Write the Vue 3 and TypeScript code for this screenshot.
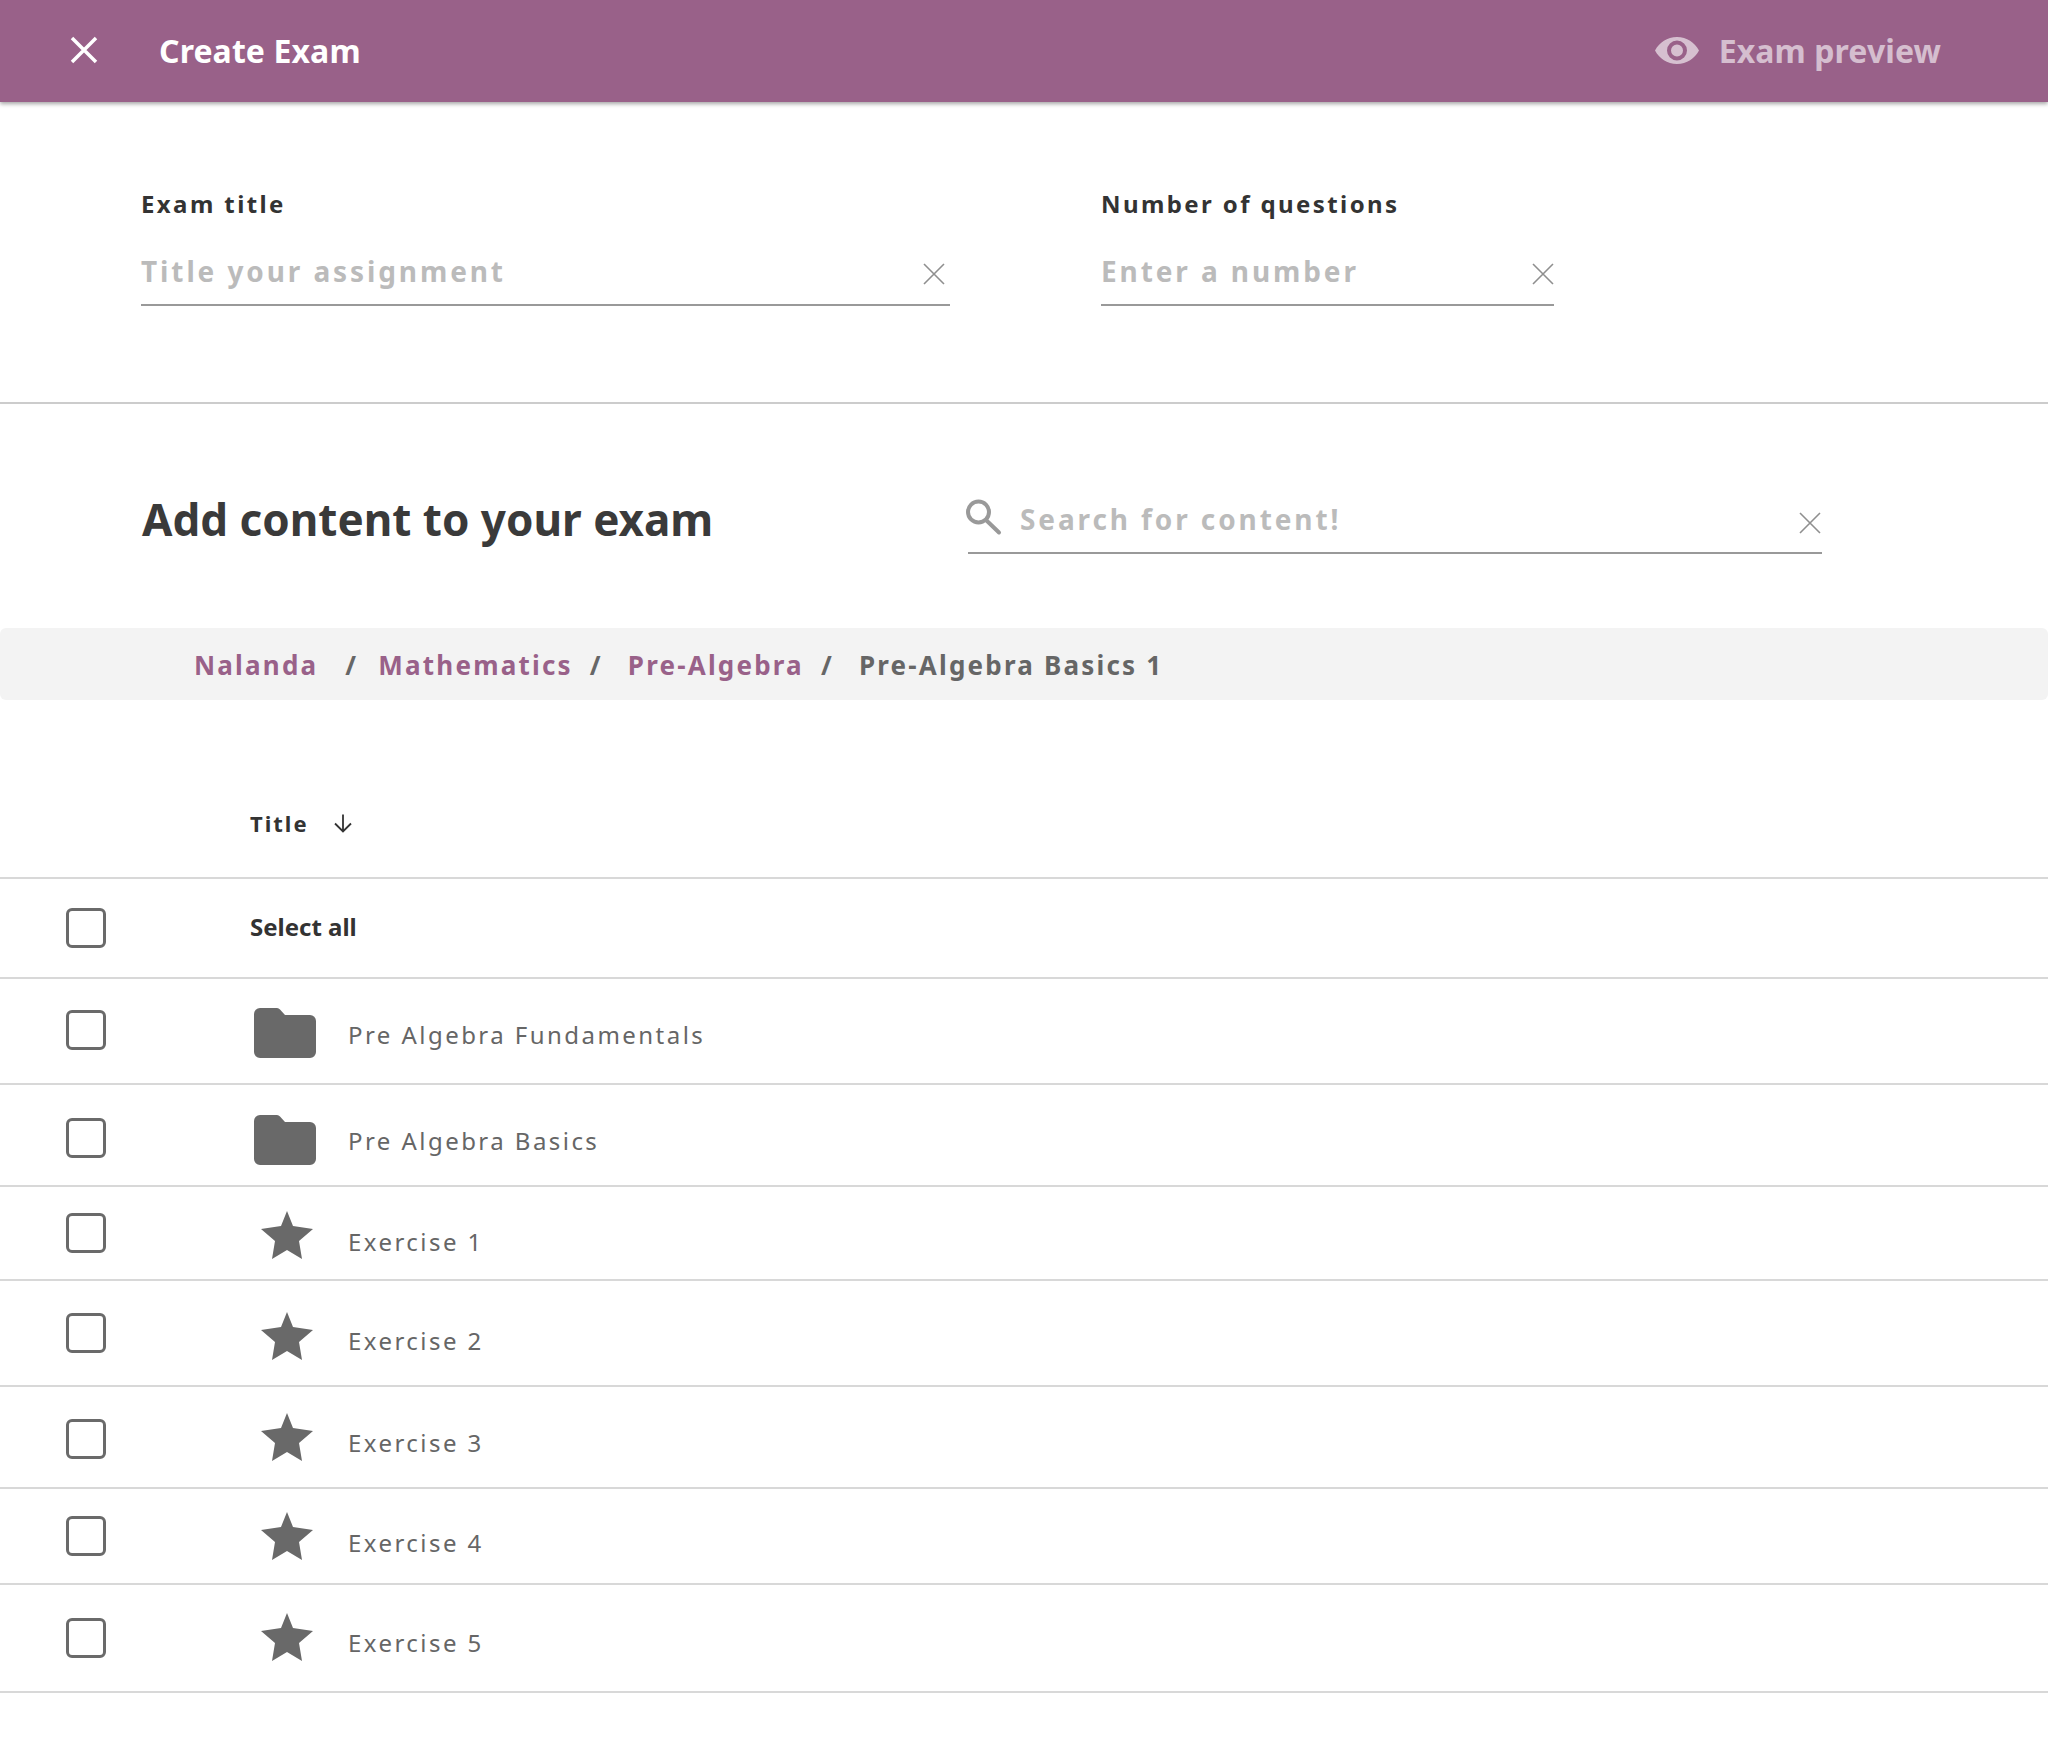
<script setup lang="ts">
interface Row {
  title: string
  kind: 'folder' | 'exercise'
  height: number
  // small per-row drift of the checkbox, icon and label around the row centre
  drift: [number, number, number]
}

const rows: Row[] = [
  { title: 'Pre Algebra Fundamentals', kind: 'folder', height: 106, drift: [-1, 0, -1] },
  { title: 'Pre Algebra Basics', kind: 'folder', height: 102, drift: [3, 3, 1] },
  { title: 'Exercise 1', kind: 'exercise', height: 94, drift: [0, 0, 2] },
  { title: 'Exercise 2', kind: 'exercise', height: 106, drift: [0, 1, 1] },
  { title: 'Exercise 3', kind: 'exercise', height: 102, drift: [2, -2, -1] },
  { title: 'Exercise 4', kind: 'exercise', height: 96, drift: [0, -2, 0] },
  { title: 'Exercise 5', kind: 'exercise', height: 108, drift: [0, -3, -2] }
]

const shift = (px: number) => ({ marginTop: px * 2 + 'px' })
</script>

<template>
  <div class="page">
    <header class="topbar">
      <svg class="close-icon" viewBox="0 0 28 28"><path d="M2 2 26 26M26 2 2 26" /></svg>
      <span class="topbar-title">Create Exam</span>
      <div class="preview">
        <svg class="eye-icon" viewBox="0 0 44 27"><path fill-rule="evenodd" d="M22 0C12 0 4.500 5.500 0 13.500 4.500 21.500 12 27 22 27s17.500-5.500 22-13.500C39.500 5.500 32 0 22 0zm0 3.500a10 10 0 1 1 0 20 10 10 0 0 1 0-20zm0 4a6 6 0 1 0 0 12 6 6 0 0 0 0-12z" /></svg>
        <span>Exam preview</span>
      </div>
    </header>

    <section class="form-row">
      <div class="field title-field">
        <label>Exam title</label>
        <div class="input-line">
          <span class="placeholder">Title your assignment</span>
          <svg class="clear-icon" viewBox="0 0 22 22"><path d="M1 1 21 21M21 1 1 21" /></svg>
        </div>
      </div>
      <div class="field number-field">
        <label>Number of questions</label>
        <div class="input-line">
          <span class="placeholder">Enter a number</span>
          <svg class="clear-icon" viewBox="0 0 22 22"><path d="M1 1 21 21M21 1 1 21" /></svg>
        </div>
      </div>
    </section>

    <section class="content-head">
      <h1>Add content to your exam</h1>
      <div class="search">
        <svg class="search-icon" viewBox="0 0 38 38"><circle cx="14.500" cy="14" r="10.500" /><path d="M22 22 35 34.500" /></svg>
        <div class="search-line">
          <span class="placeholder">Search for content!</span>
          <svg class="clear-icon" viewBox="0 0 22 22"><path d="M1 1 21 21M21 1 1 21" /></svg>
        </div>
      </div>
    </section>

    <nav class="crumbs">
      <a>Nalanda</a>
      <span class="sep first">/</span>
      <a>Mathematics</a>
      <span class="sep">/</span>
      <a>Pre-Algebra</a>
      <span class="sep">/</span>
      <span>Pre-Algebra Basics 1</span>
    </nav>

    <div class="table">
      <div class="table-head">
        <span>Title</span>
        <svg class="sort-icon" viewBox="0 0 20 20"><path d="M10 1.500V18.500M2 10.500 10 18.500 18 10.500" /></svg>
      </div>
      <div class="row select-row">
        <span class="check"></span>
        <strong>Select all</strong>
      </div>
      <div v-for="row in rows" :key="row.title" class="row" :style="{ height: row.height + 'px' }">
        <span class="check" :style="shift(row.drift[0])"></span>
        <div class="row-main">
          <span class="icon-slot" :style="shift(row.drift[1])">
            <svg v-if="row.kind === 'folder'" class="folder-icon" viewBox="0 0 62 50"><path d="M6 0H23a4 4 0 0 1 3 1.500L31 7H56a6 6 0 0 1 6 6V44a6 6 0 0 1-6 6H6a6 6 0 0 1-6-6V6a6 6 0 0 1 6-6z" /></svg>
            <svg v-else class="star-icon" viewBox="0 0 52 48"><path d="M26 0 32 15 52 18 38 30 41 48 26 39 11 48 14 30 0 18 20 15z" /></svg>
          </span>
          <span class="row-title" :class="row.kind" :style="shift(row.drift[2])">{{ row.title }}</span>
        </div>
      </div>
    </div>
  </div>
</template>

<style scoped>
.page {
  width: 2048px;
  height: 1746px;
  background: #fff;
  font-family: "Noto Sans", sans-serif;
  overflow: hidden;
}

.topbar {
  height: 102px;
  display: flex;
  align-items: center;
  padding: 0 107px 2px 70px;
  background: #996189;
  box-shadow: 0 2px 4px rgba(0, 0, 0, 0.35);
  color: #fff;
  box-sizing: border-box;
  letter-spacing: 0.1px;
}

.close-icon {
  width: 28px;
  height: 28px;
  fill: none;
  stroke: #fff;
  stroke-width: 3.5;
}

.topbar-title {
  margin-left: 61px;
  font-size: 32px;
  font-weight: 700;
}

.preview {
  margin-left: auto;
  display: flex;
  align-items: center;
  gap: 20px;
  font-size: 32px;
  font-weight: 700;
  color: rgba(255, 255, 255, 0.6);
}

.eye-icon {
  width: 44px;
  height: 27px;
  fill: rgba(255, 255, 255, 0.6);
}

.form-row {
  height: 302px;
  box-sizing: border-box;
  border-bottom: 2px solid #ccc;
  display: flex;
  padding: 86px 0 0 141px;
}

.field label {
  display: block;
  font-size: 24px;
  font-weight: 700;
  letter-spacing: 2.4px;
  line-height: 32px;
  color: #333;
}

.title-field {
  width: 809px;
  margin-right: 151px;
}

.number-field {
  width: 453px;
}

.input-line {
  margin-top: 32px;
  height: 52px;
  border-bottom: 2px solid #999;
  display: flex;
  align-items: flex-start;
  justify-content: space-between;
}

.placeholder {
  font-size: 28px;
  font-weight: 700;
  letter-spacing: 2.9px;
  line-height: 38px;
  color: #bbb;
}

.clear-icon {
  width: 22px;
  height: 22px;
  margin: 11px 5px 0 0;
  fill: none;
  stroke: #8f8f8f;
  stroke-width: 1.6;
}

.number-field .clear-icon {
  margin-right: 0;
}

.content-head {
  height: 224px;
  box-sizing: border-box;
  display: flex;
  padding: 85px 0 0 141px;
}

.content-head h1 {
  width: 823px;
  margin: 0 0 0 1px;
  font-size: 44px;
  font-weight: 700;
  line-height: 60px;
  color: #3a3a3a;
}

.search {
  position: relative;
  width: 854px;
  margin-left: 3px;
}

.search-icon {
  position: absolute;
  left: -4px;
  top: 9px;
  width: 38px;
  height: 38px;
  fill: none;
  stroke: #999;
  stroke-width: 4;
  stroke-linecap: round;
}

.search-line {
  height: 65px;
  border-bottom: 2px solid #999;
  display: flex;
  justify-content: space-between;
  align-items: flex-start;
  padding: 11px 0 0 52px;
  box-sizing: border-box;
}

.search-line .clear-icon {
  margin: 12px 1px 0 0;
}

.crumbs {
  height: 72px;
  box-sizing: border-box;
  display: flex;
  align-items: center;
  padding: 1px 0 0 194px;
  background: #f3f3f3;
  border-radius: 6px;
  font-size: 26px;
  font-weight: 700;
  letter-spacing: 2.2px;
  color: #666;
}

.crumbs a {
  color: #996189;
}

.sep {
  margin: 0 25px 0 17px;
}

.sep.first {
  margin: 0 20px 0 27px;
}

.table {
  margin-top: 109px;
}

.table-head {
  height: 70px;
  padding: 0 0 40px 250px;
  box-sizing: border-box;
  display: flex;
  align-items: center;
  gap: 24px;
  border-bottom: 2px solid #d8d8d8;
  font-size: 22px;
  font-weight: 700;
  letter-spacing: 2px;
  color: #333;
}

.sort-icon {
  width: 20px;
  height: 20px;
  fill: none;
  stroke: #333;
  stroke-width: 1.8;
}

.row {
  box-sizing: border-box;
  border-bottom: 2px solid #d8d8d8;
  display: flex;
  align-items: center;
  padding-left: 66px;
}

.select-row {
  height: 100px;
}

.select-row strong {
  margin: -4px 0 0 144px;
  font-size: 24px;
  font-weight: 700;
  color: #333;
}

.check {
  flex: none;
  width: 40px;
  height: 40px;
  box-sizing: border-box;
  border: 3px solid #6a6a6a;
  border-radius: 6px;
}

.row-main {
  flex: 1;
  display: flex;
  align-items: center;
  margin-left: 148px;
  padding-top: 4px;
}

.icon-slot {
  width: 94px;
  display: flex;
}

.folder-icon {
  width: 62px;
  height: 50px;
  fill: #696969;
}

.star-icon {
  width: 52px;
  height: 48px;
  margin-left: 7px;
  fill: #696969;
}

.row-title {
  font-size: 24px;
  letter-spacing: 2.45px;
  color: #666;
}

.row-title.exercise {
  padding-top: 8px;
}

.row-title.folder {
  padding-top: 4px;
}
</style>

<style>
html, body {
  margin: 0;
  background: #fff;
}
</style>
